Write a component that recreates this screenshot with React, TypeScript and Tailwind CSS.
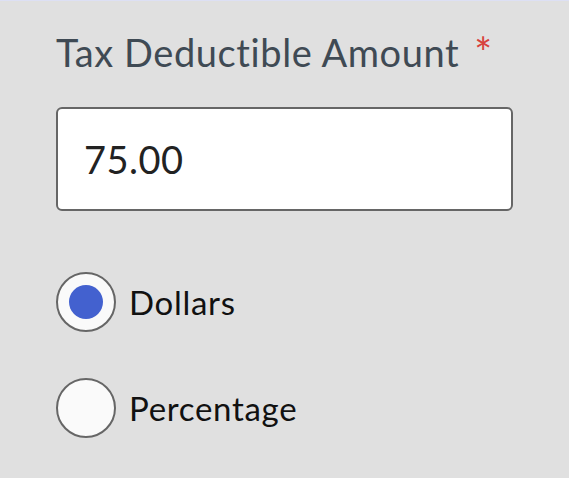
import React, { useState } from 'react';

type Unit = 'dollars' | 'percentage';

const font = { fontFamily: 'Lato, "Noto Sans", sans-serif' };

const RadioOption: React.FC<{
  label: string;
  checked: boolean;
  onSelect: () => void;
}> = ({ label, checked, onSelect }) => (
  <label className="flex items-center gap-[13px] cursor-pointer">
    <span className="flex items-center justify-center w-[60px] h-[60px] rounded-full border-2 border-[#666666] bg-[#fafafa]">
      {checked && <span className="block w-[34px] h-[34px] rounded-full bg-[#4361cf]" />}
    </span>
    <input
      type="radio"
      className="sr-only"
      checked={checked}
      onChange={onSelect}
    />
    <span className="text-[33px] leading-[40px] tracking-[0.7px] text-[#111111]">{label}</span>
  </label>
);

export default function App() {
  const [amount, setAmount] = useState('75.00');
  const [unit, setUnit] = useState<Unit>('dollars');

  return (
    <div
      className="h-[478px] w-full bg-[#e0e0e0] border-t border-[#dde0f4] pt-[27px] pl-[56px]"
      style={font}
    >
      <div className="flex items-start text-[38px] leading-[48px] text-[#3f4a54]">
        <span className="tracking-[0.6px]">Tax Deductible Amount</span>
        <span className="ml-[15px] text-[42px] leading-[48px] text-[#d8403c]">*</span>
      </div>

      <input
        value={amount}
        onChange={e => setAmount(e.target.value)}
        className="mt-[31px] block w-[457px] h-[104px] rounded-md border-2 border-[#666666] bg-white pl-[26px] text-[38px] tracking-[0.5px] text-[#222222] outline-none"
        style={font}
      />

      <div className="mt-[61px] flex flex-col gap-[46px]">
        <RadioOption label="Dollars" checked={unit === 'dollars'} onSelect={() => setUnit('dollars')} />
        <RadioOption label="Percentage" checked={unit === 'percentage'} onSelect={() => setUnit('percentage')} />
      </div>
    </div>
  );
}
